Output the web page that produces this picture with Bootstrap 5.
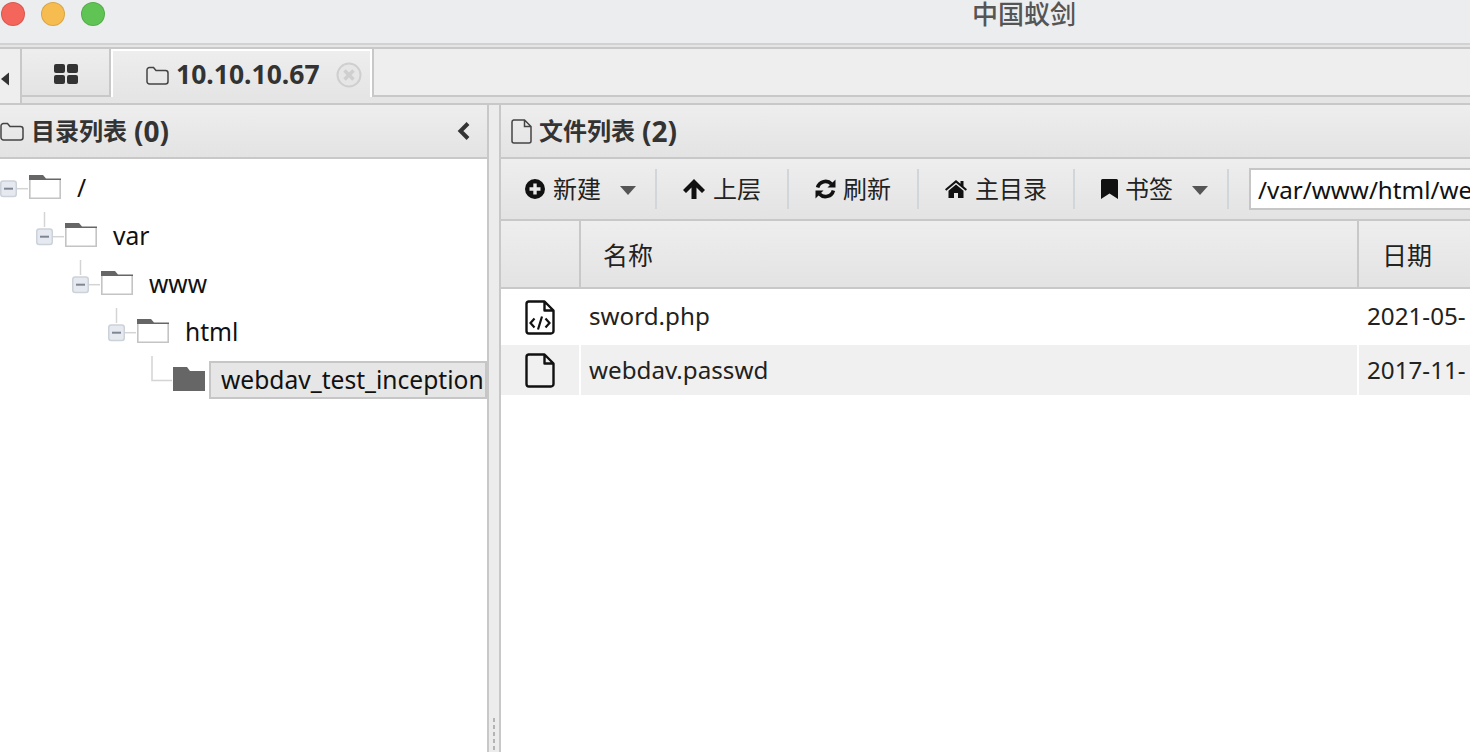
<!DOCTYPE html>
<html lang="zh-CN">
<head>
    <meta charset="UTF-8">
    <meta name="viewport" content="width=device-width, initial-scale=1.0">
    <title>中国蚁剑</title>
    <link href="https://cdn.jsdelivr.net/npm/bootstrap@5.3.0/dist/css/bootstrap.min.css" rel="stylesheet">
    <style>
        html, body { height: 100%; }
        body {
            background: #fff;
            color: #222;
            font-family: "Noto Sans", "Noto Sans CJK SC", sans-serif;
            overflow: hidden;
        }
        .app-frame { width: 1470px; height: 752px; overflow: hidden; }
        .grad { background: linear-gradient(#eeeeee, #e3e3e3); }

        /* title bar */
        .title-bar { height: 45px; background: #ecedef; border-bottom: 2px solid #d2d2d2; padding-left: 1px; }
        .light { width: 24px; height: 24px; border-radius: 50%; margin-top: 2px; border: 1px solid rgba(0,0,0,.12); }
        .light-red { background: #f4655b; }
        .light-yellow { background: #f6bc4f; }
        .light-green { background: #5fc454; }
        .title-text { position: absolute; left: 972px; top: 0; font-size: 26px; font-weight: 500; color: #555; line-height: 28px; }

        /* tabs */
        .tab-bar { height: 60px; padding-top: 2px; background: #e5e5e5; border-bottom: 2px solid #c8c8c8; }
        .tab-arrow { width: 22px; height: 56px; padding-top: 6px; border-top: 2px solid #c8c8c8; border-right: 2px solid #c8c8c8; background: #eeeeee; }
        .tab-cell { height: 50px; padding-top: 3px; border-top: 2px solid #c8c8c8; border-bottom: 2px solid #c8c8c8; border-right: 2px solid #c8c8c8; }
        .tab-home { width: 89px; }
        .tab-active {
            width: 263px; height: 50px; padding-top: 4px;
            border-top: 2px solid #c8c8c8; border-right: 2px solid #c8c8c8;
            box-shadow: inset 2px 2px 0 #fff, inset -2px 0 0 #fff;
            padding-left: 35px;
            font-size: 26.500px; font-weight: 700; color: #333;
            background: linear-gradient(#eeeeee, #e5e5e5);
        }
        .tab-rest { height: 50px; border-top: 2px solid #c8c8c8; border-bottom: 2px solid #c8c8c8; background: #eeeeee; }

        /* panels */
        .panes { height: 647px; }
        .left-pane { width: 487px; }
        .splitter { width: 14px; background: #ececec; border-left: 2px solid #c8c8c8; border-right: 2px solid #c8c8c8; position: relative; }
        .grip { position: absolute; left: 4px; bottom: 0; width: 2px; height: 34px; background: repeating-linear-gradient(#b4b4b4 0 4px, transparent 4px 7px); }
        .right-pane { width: 969px; }
        .pane-head {
            height: 54px; border-bottom: 2px solid #c8c8c8;
            font-size: 24px; font-weight: 700; color: #333;
        }
        .head-gap { margin-left: 7px; }
        .head-count { font-size: 28px; margin-left: 7px; }
        .head-file { padding-left: 10px; }

        /* tree */
        .tree-wrap { padding-top: 5px; }
        .tree-row { height: 48px; font-size: 24.600px; color: #111; white-space: nowrap; }
        .depth-1 { padding-left: 36px; }
        .depth-2 { padding-left: 72px; }
        .depth-3 { padding-left: 108px; }
        .depth-4 { padding-left: 144px; }
        .tree-label { margin-left: 15px; line-height: 34px; }
        .tree-label-sel {
            margin-left: 4px; height: 38px; line-height: 33px; flex: 1 1 auto; overflow: hidden;
            padding-left: 10px; margin-top: 5px;
            background: #e6e6e6; border: 2px solid #c6c6c6;
        }

        /* toolbar */
        .tool-bar { height: 62px; padding-left: 24px; border-bottom: 2px solid #c8c8c8; font-size: 24px; color: #222; }
        .tool-btn { height: 40px; padding: 0 26px 0 26px; border-right: 2px solid #d0d6da; white-space: nowrap; }
        .tool-btn:first-child { padding-left: 0; }
        .has-caret { padding-right: 19px; }
        .tool-caret { margin-left: 19px; margin-top: 3px; }
        .icon-gap { margin-right: 7px; }
        .path-box {
            width: 300px; height: 42px; margin-left: 20px; padding: 0 7px;
            border: 2px solid #c6c6c6; background: #fff; font-size: 24.200px; color: #111;
            border-radius: 0; outline: 0;
        }

        /* file grid */
        .grid-head { height: 68px; border-bottom: 2px solid #c8c8c8; font-size: 25px; color: #222; }
        .grid-head .col-name span, .grid-head .col-date span { margin-top: 3px; }
        .col-icon { width: 80px; flex: none; }
        .col-name { width: 778px; flex: none; }
        .col-date { flex: 1 1 auto; white-space: nowrap; overflow: hidden; }
        .grid-head .col-icon, .grid-head .col-name { border-right: 2px solid #c8c8c8; }
        .grid-head .col-name { padding-left: 22px; }
        .grid-head .col-date { padding-left: 23px; }
        .file-row { font-size: 24.200px; color: #222; }
        .row-a { height: 56px; }
        .row-b { height: 50px; }
        .row-a .col-name, .row-a .col-date { padding-bottom: 2px; }
        .row-b .cell-tint { background: #f0f0f0; }
        .file-row .col-icon { border-right: 2px solid #fff; }
        .file-row .col-name { border-right: 2px solid #fff; padding-left: 8px; }
        .file-row .col-date { padding-left: 8px; }
    </style>
</head>
<body>
<div class="app-frame d-flex flex-column position-relative">

    <div class="title-bar d-flex gap-3 flex-shrink-0">
        <div class="light light-red"></div>
        <div class="light light-yellow"></div>
        <div class="light light-green"></div>
        <div class="title-text">中国蚁剑</div>
    </div>

    <div class="tab-bar d-flex flex-shrink-0">
        <div class="tab-arrow d-flex align-items-center">
            <svg width="10" height="16" viewBox="0 0 10 16"><path d="M9 1.500v13L1 8z" fill="#333"/></svg>
        </div>
        <div class="tab-cell tab-home grad d-flex align-items-center justify-content-center">
            <svg width="24" height="20" viewBox="0 0 24 20"><g fill="#333"><rect x="0" y="0" width="11" height="9" rx="2"/><rect x="13" y="0" width="11" height="9" rx="2"/><rect x="0" y="11" width="11" height="9" rx="2"/><rect x="13" y="11" width="11" height="9" rx="2"/></g></svg>
        </div>
        <div class="tab-active d-flex align-items-center">
            <svg width="23" height="19" viewBox="0 0 23 19"><path d="M1 4a2.500 2.500 0 0 1 2.500-2.500h4L10 4.500h9.500A2.500 2.500 0 0 1 22 7v8.500a2.500 2.500 0 0 1-2.500 2.500h-16A2.500 2.500 0 0 1 1 15.500z" fill="none" stroke="#444" stroke-width="1.500"/></svg>
            <span class="head-gap">10.10.10.67</span>
            <svg class="ms-3" width="26" height="26" viewBox="0 0 26 26"><circle cx="13" cy="13" r="11.500" fill="#e6e6e6" stroke="#cfcfcf" stroke-width="2"/><path d="M8.500 8.500l9 9M17.500 8.500l-9 9" stroke="#cfcfcf" stroke-width="3.500"/></svg>
        </div>
        <div class="tab-rest flex-grow-1"></div>
    </div>

    <div class="panes d-flex flex-grow-1">
        <div class="left-pane d-flex flex-column flex-shrink-0">
            <div class="pane-head grad d-flex align-items-center justify-content-between">
                <div class="d-flex align-items-center">
                    <svg width="24" height="19" viewBox="0 0 24 19"><path d="M1 4a2.500 2.500 0 0 1 2.500-2.500h4L10 4.500h10.500A2.500 2.500 0 0 1 23 7v8.500a2.500 2.500 0 0 1-2.500 2.500h-17A2.500 2.500 0 0 1 1 15.500z" fill="none" stroke="#444" stroke-width="1.500"/></svg>
                    <span class="head-gap">目录列表</span><span class="head-count">(0)</span>
                </div>
                <svg class="me-3" width="14" height="20" viewBox="0 0 14 20"><path d="M11 2.500L3.500 10l7.500 7.500" fill="none" stroke="#333" stroke-width="4"/></svg>
            </div>
            <div class="tree-wrap flex-grow-1 bg-white">
                <div class="tree-row d-flex align-items-center">
                    <svg width="62" height="48" viewBox="0 0 62 48"><use href="#node-open"/></svg>
                    <span class="tree-label">/</span>
                </div>
                <div class="tree-row depth-1 d-flex align-items-center">
                    <svg width="62" height="48" viewBox="0 0 62 48"><path d="M8.500 0v15" stroke="#d4d4d4" stroke-width="1.500"/><use href="#node-open"/></svg>
                    <span class="tree-label">var</span>
                </div>
                <div class="tree-row depth-2 d-flex align-items-center">
                    <svg width="62" height="48" viewBox="0 0 62 48"><path d="M8.500 0v15" stroke="#d4d4d4" stroke-width="1.500"/><use href="#node-open"/></svg>
                    <span class="tree-label">www</span>
                </div>
                <div class="tree-row depth-3 d-flex align-items-center">
                    <svg width="62" height="48" viewBox="0 0 62 48"><path d="M8.500 0v15" stroke="#d4d4d4" stroke-width="1.500"/><use href="#node-open"/></svg>
                    <span class="tree-label">html</span>
                </div>
                <div class="tree-row depth-4 d-flex align-items-start">
                    <svg width="61" height="48" viewBox="0 0 61 48"><path d="M8 0v24.500h20" fill="none" stroke="#d4d4d4" stroke-width="1.500"/><path d="M29 11h14l3 4h15v20H29z" fill="#666"/></svg>
                    <span class="tree-label-sel">webdav_test_inception</span>
                </div>
            </div>
        </div>

        <div class="splitter flex-shrink-0"><div class="grip"></div></div>

        <div class="right-pane d-flex flex-column flex-shrink-0">
            <div class="pane-head head-file grad d-flex align-items-center">
                <svg width="21" height="25" viewBox="0 0 21 25"><path d="M2.500 1h11L20 7.500V22a2 2 0 0 1-2 2H3a2 2 0 0 1-2-2V3a2 2 0 0 1 1.500-2zM13.500 1v6.500H20" fill="none" stroke="#444" stroke-width="1.500"/></svg>
                <span class="head-gap">文件列表</span><span class="head-count">(2)</span>
            </div>
            <div class="tool-bar grad d-flex align-items-center">
                <div class="tool-btn has-caret d-flex align-items-center">
                    <svg class="me-2" width="20" height="20" viewBox="0 0 20 20"><path fill-rule="evenodd" d="M10 0a10 10 0 1 0 0 20a10 10 0 0 0 0-20zM8.300 4.500h3.400v3.800h3.800v3.400h-3.800v3.800H8.300v-3.800H4.500V8.300h3.800z" fill="#111"/></svg>
                    <span>新建</span>
                    <svg class="tool-caret" width="16" height="9" viewBox="0 0 16 9"><path d="M0 0h16L8 9z" fill="#555"/></svg>
                </div>
                <div class="tool-btn d-flex align-items-center">
                    <svg class="me-2" width="22" height="20" viewBox="0 0 22 20"><path d="M11 0l11 11-3 3-5.500-5.500V20h-5V8.500L3 14l-3-3z" fill="#111"/></svg>
                    <span>上层</span>
                </div>
                <div class="tool-btn d-flex align-items-center">
                    <svg class="icon-gap" width="21" height="20" viewBox="0 0 21 20"><g fill="none" stroke="#111" stroke-width="3.600"><path d="M2.600 8.500A8.200 8.200 0 0 1 16.500 5"/><path d="M18.400 11.500A8.200 8.200 0 0 1 4.500 15"/></g><path d="M20.500 0.500v8h-8zM0.500 19.500v-8h8z" fill="#111"/></svg>
                    <span>刷新</span>
                </div>
                <div class="tool-btn d-flex align-items-center">
                    <svg class="me-2" width="22" height="18" viewBox="0 0 22 18"><path d="M11 0L0 9.300l1.300 1.500L11 2.700l9.700 8.100 1.300-1.500-3.500-3V1h-3v2.800zM11 4.500l-7.500 6.300V18h5.500v-5h4v5h5.500v-7.200z" fill="#111"/></svg>
                    <span>主目录</span>
                </div>
                <div class="tool-btn has-caret d-flex align-items-center">
                    <svg class="icon-gap" width="17" height="20" viewBox="0 0 17 20"><path d="M1.500 0h14A1.500 1.500 0 0 1 17 1.500V20l-8.500-5.500L0 20V1.500A1.500 1.500 0 0 1 1.500 0z" fill="#111"/></svg>
                    <span>书签</span>
                    <svg class="tool-caret" width="16" height="9" viewBox="0 0 16 9"><path d="M0 0h16L8 9z" fill="#555"/></svg>
                </div>
                <input class="path-box flex-grow-1" type="text" value="/var/www/html/webdav_test_inception">
            </div>
            <div class="grid-head grad d-flex align-items-stretch">
                <div class="col-icon"></div>
                <div class="col-name d-flex align-items-center"><span>名称</span></div>
                <div class="col-date d-flex align-items-center"><span>日期</span></div>
            </div>
            <div class="file-row row-a d-flex align-items-stretch">
                <div class="col-icon d-flex align-items-center justify-content-center">
                    <svg width="30" height="35" viewBox="0 0 30 35"><path d="M3.500 1.500h16l9 9V31a2.500 2.500 0 0 1-2.500 2.500H4A2.500 2.500 0 0 1 1.500 31V4A2.500 2.500 0 0 1 3.500 1.500zM19.500 1.500v9h9" fill="none" stroke="#111" stroke-width="2.400" stroke-linejoin="round"/><path d="M9.500 18.500L5.500 23l4 4.500M20.500 18.500l4 4.500-4 4.500M17 16.500l-4 13" fill="none" stroke="#111" stroke-width="2.200"/></svg>
                </div>
                <div class="col-name d-flex align-items-center">sword.php</div>
                <div class="col-date d-flex align-items-center">2021-05-</div>
            </div>
            <div class="file-row row-b d-flex align-items-stretch">
                <div class="col-icon cell-tint d-flex align-items-center justify-content-center">
                    <svg width="30" height="35" viewBox="0 0 30 35"><path d="M3.500 1.500h16l9 9V31a2.500 2.500 0 0 1-2.500 2.500H4A2.500 2.500 0 0 1 1.500 31V4A2.500 2.500 0 0 1 3.500 1.500zM19.500 1.500v9h9" fill="none" stroke="#111" stroke-width="2.400" stroke-linejoin="round"/></svg>
                </div>
                <div class="col-name cell-tint d-flex align-items-center">webdav.passwd</div>
                <div class="col-date cell-tint d-flex align-items-center">2017-11-</div>
            </div>
        </div>
    </div>
</div>

<svg width="0" height="0" class="position-absolute">
    <defs>
        <g id="node-open">
            <rect x="0.750" y="17" width="15.500" height="15.500" rx="2.500" fill="#e6eaf0" stroke="#ccd2da" stroke-width="1.500"/>
            <path d="M4 24.700h9" stroke="#7d8794" stroke-width="2"/>
            <path d="M17 24.700h11" stroke="#d4d4d4" stroke-width="1.500"/>
            <path d="M29 35V11h14l3 4h15v20z" fill="#fff"/>
            <path d="M29.800 15v19.200h30.400V15" fill="none" stroke="#c4c4c4" stroke-width="1.600"/>
            <path d="M29 15.800V11h14l3 3.400h15v1.600H29z" fill="#666"/>
        </g>
    </defs>
</svg>

<script src="https://cdn.jsdelivr.net/npm/bootstrap@5.3.0/dist/js/bootstrap.bundle.min.js"></script>
</body>
</html>
